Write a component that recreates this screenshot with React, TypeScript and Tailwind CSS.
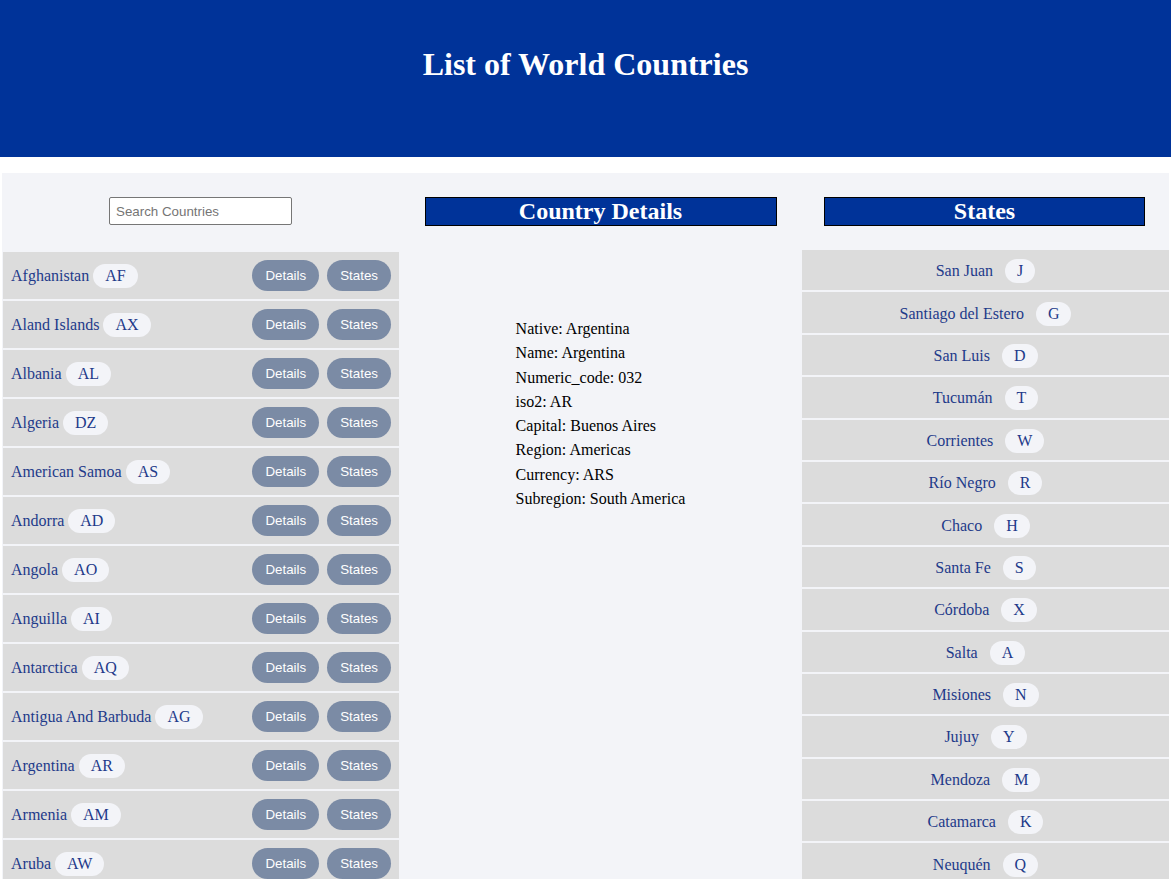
import React from "react";

const countries: [string, string][] = [
  ["Afghanistan", "AF"],
  ["Aland Islands", "AX"],
  ["Albania", "AL"],
  ["Algeria", "DZ"],
  ["American Samoa", "AS"],
  ["Andorra", "AD"],
  ["Angola", "AO"],
  ["Anguilla", "AI"],
  ["Antarctica", "AQ"],
  ["Antigua And Barbuda", "AG"],
  ["Argentina", "AR"],
  ["Armenia", "AM"],
  ["Aruba", "AW"],
];

const states: [string, string][] = [
  ["San Juan", "J"],
  ["Santiago del Estero", "G"],
  ["San Luis", "D"],
  ["Tucumán", "T"],
  ["Corrientes", "W"],
  ["Río Negro", "R"],
  ["Chaco", "H"],
  ["Santa Fe", "S"],
  ["Córdoba", "X"],
  ["Salta", "A"],
  ["Misiones", "N"],
  ["Jujuy", "Y"],
  ["Mendoza", "M"],
  ["Catamarca", "K"],
  ["Neuquén", "Q"],
];

const details = [
  "Native: Argentina",
  "Name: Argentina",
  "Numeric_code: 032",
  "iso2: AR",
  "Capital: Buenos Aires",
  "Region: Americas",
  "Currency: ARS",
  "Subregion: South America",
];

export default function App() {
  return (
    <div className="min-h-screen bg-white font-['Liberation_Serif','Times_New_Roman',serif]">
      <header className="h-[157px] bg-[#003399] pt-[46px] text-center">
        <h1 className="text-[32px] font-bold leading-[37px] text-white">
          List of World Countries
        </h1>
      </header>

      <main className="mx-[2px] mt-4 flex bg-[#f3f4f8] pt-6">
        {/* Left column */}
        <section className="w-[397px] shrink-0">
          <div className="flex justify-center">
            <input
              type="text"
              placeholder="Search Countries"
              className="h-[28px] w-[183px] rounded-[2px] border border-[#767676] bg-white px-[6px] font-['Liberation_Sans',Arial,sans-serif] text-[13.33px] text-black placeholder:text-[#757575]"
            />
          </div>
          <ul className="mt-[27px] flex flex-col gap-[2px] pl-px">
            {countries.map(([name, code]) => (
              <li
                key={code}
                className="flex h-[47px] items-center justify-between bg-[#dcdcdc] pl-2 pr-2"
              >
                <div className="flex items-center text-[16px] text-[#1e3a8a]">
                  <span>{name}</span>
                  <span className="ml-[4px] flex h-[24px] items-center rounded-full bg-[#f3f4f8] px-3">
                    {code}
                  </span>
                </div>
                <div className="flex gap-2 font-['Liberation_Sans',Arial,sans-serif] text-[13.33px] text-white">
                  <button className="h-[31px] rounded-full bg-[#7b8ba5] px-[13px]">
                    Details
                  </button>
                  <button className="h-[31px] rounded-full bg-[#7b8ba5] px-[13px]">
                    States
                  </button>
                </div>
              </li>
            ))}
          </ul>
        </section>

        {/* Middle column */}
        <section className="w-[403px] shrink-0">
          <h2 className="mx-auto h-[29px] w-[352px] border border-black bg-[#003399] text-center text-[24px] font-bold leading-[26px] text-white">
            Country Details
          </h2>
          <div className="mt-[91px] flex justify-center">
            <div className="text-[16px] leading-[24.3px] text-black">
              {details.map((d) => (
                <div key={d}>{d}</div>
              ))}
            </div>
          </div>
        </section>

        {/* Right column */}
        <section className="min-w-0 flex-1">
          <h2 className="mx-auto h-[29px] w-[321px] -translate-x-px border border-black bg-[#003399] text-center text-[24px] font-bold leading-[26px] text-white">
            States
          </h2>
          <ul className="mt-6 flex flex-col gap-[2px]">
            {states.map(([name, code]) => (
              <li
                key={name}
                className="flex h-[40.4px] items-center justify-center bg-[#dcdcdc] pt-[2px] text-[16px] text-[#1e3a8a]"
              >
                <span>{name}</span>
                <span className="ml-3 flex h-[24px] items-center rounded-full bg-[#f3f4f8] px-[12px]">
                  {code}
                </span>
              </li>
            ))}
          </ul>
        </section>
      </main>
    </div>
  );
}
